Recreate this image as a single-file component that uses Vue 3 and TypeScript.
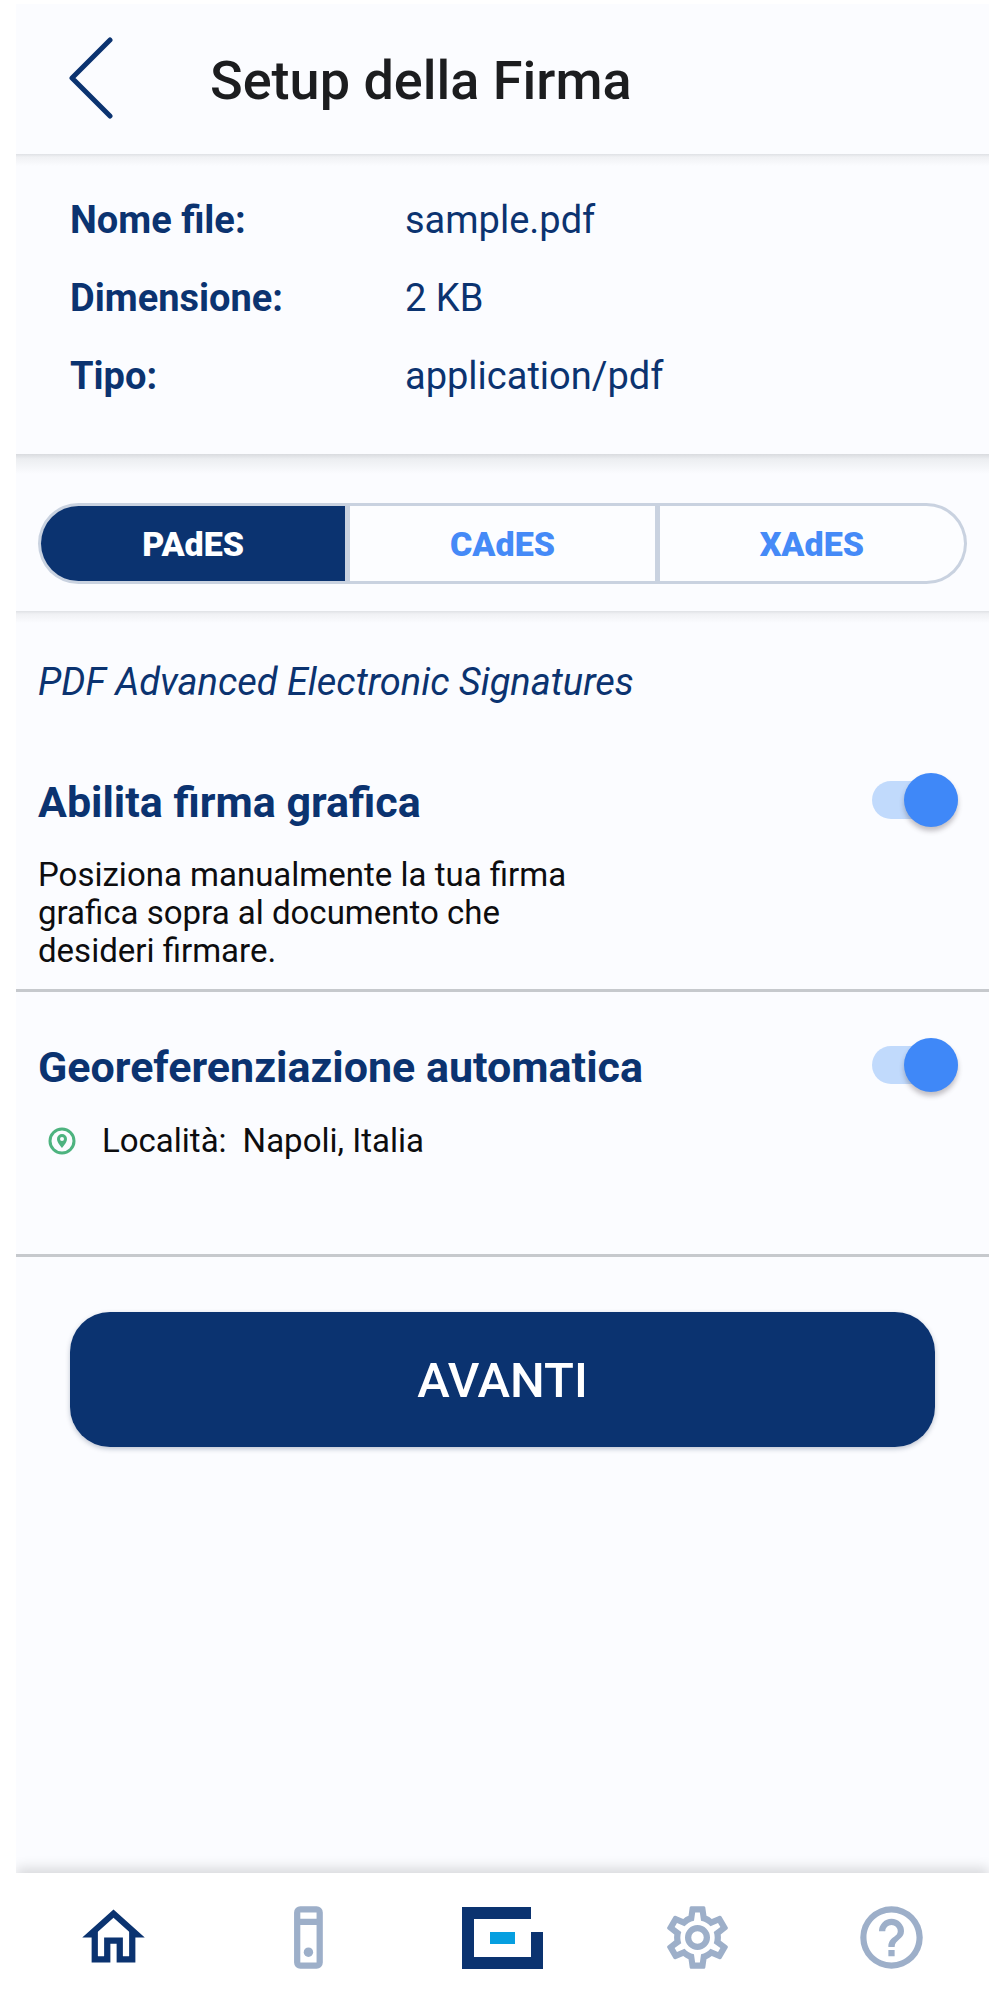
<script setup lang="ts">
import { ref } from 'vue'

interface FileRow { label: string; value: string }

const rows: FileRow[] = [
  { label: 'Nome file:', value: 'sample.pdf' },
  { label: 'Dimensione:', value: '2 KB' },
  { label: 'Tipo:', value: 'application/pdf' },
]
const formats: string[] = ['PAdES', 'CAdES', 'XAdES']
const selected = ref<string>('PAdES')
const graphic = ref<boolean>(true)
const geo = ref<boolean>(true)
</script>

<template>
  <div class="page">
    <header class="bar">
      <button class="back" type="button" aria-label="Indietro">
        <svg width="46" height="84" viewBox="0 0 46 84" fill="none" stroke="currentColor" stroke-width="5" stroke-linecap="round" stroke-linejoin="round">
          <path d="M42 3L4 41L42 79" />
        </svg>
      </button>
      <h1>Setup della Firma</h1>
    </header>

    <main>
      <dl class="info shade">
        <div v-for="row in rows" :key="row.label" class="info-row">
          <dt>{{ row.label }}</dt>
          <dd>{{ row.value }}</dd>
        </div>
      </dl>

      <div class="formats shade deep">
        <div class="segments">
          <button
            v-for="format in formats"
            :key="format"
            type="button"
            :class="{ active: selected === format }"
            :aria-pressed="selected === format"
            @click="selected = format"
          >{{ format }}</button>
        </div>
      </div>

      <section class="option shade">
        <p class="kind">PDF Advanced Electronic Signatures</p>
        <div class="option-head">
          <label for="graphic">Abilita firma grafica</label>
          <input id="graphic" v-model="graphic" class="switch" type="checkbox">
        </div>
        <p class="note">Posiziona manualmente la tua firma grafica sopra al documento che desideri firmare.</p>
      </section>

      <section class="option geo">
        <div class="option-head">
          <label for="geo">Georeferenziazione automatica</label>
          <input id="geo" v-model="geo" class="switch" type="checkbox">
        </div>
        <p class="place">
          <svg width="28" height="28" viewBox="0 0 28 28" aria-hidden="true">
            <circle cx="14" cy="14" r="12" fill="none" stroke="currentColor" stroke-width="3" />
            <path fill="currentColor" fill-rule="evenodd" d="M14 7a5 5 0 0 0-5 5c0 3.600 5 9 5 9s5-5.400 5-9a5 5 0 0 0-5-5zm0 3a2 2 0 1 1 0 4a2 2 0 0 1 0-4z" />
          </svg>
          <span>Località:</span>
          <span>Napoli, Italia</span>
        </p>
      </section>

      <div class="action">
        <button class="next" type="button">AVANTI</button>
      </div>
    </main>

    <nav class="tabs">
      <a href="#home" class="current" aria-label="Home">
        <svg viewBox="0 0 24 24"><path d="M12 5.690L17 10.190V18H15V12H9V18H7V10.190L12 5.690M12 3L2 12H5V20H11V14H13V20H19V12H22" /></svg>
      </a>
      <a href="#device" aria-label="Dispositivo">
        <svg viewBox="0 0 24 24">
          <path fill-rule="evenodd" d="M9.700 2h5.200a2 2 0 0 1 2 2v16a2 2 0 0 1-2 2H9.700a2 2 0 0 1-2-2V4a2 2 0 0 1 2-2zm0 2v2h5.200V4zm0 4v12h5.200V8z" />
          <circle cx="12.300" cy="16.700" r="1.500" />
        </svg>
      </a>
      <a href="#sign" aria-label="Firma">
        <svg class="logo" viewBox="0 0 81 62">
          <path fill="#0b3370" d="M0 0H69V12H12V50H69V25H81V62H0z" />
          <path fill="#069fe0" d="M28 25H53V37H28z" />
        </svg>
      </a>
      <a href="#settings" aria-label="Impostazioni">
        <svg viewBox="0 0 24 24"><path d="M12,8A4,4 0 0,1 16,12A4,4 0 0,1 12,16A4,4 0 0,1 8,12A4,4 0 0,1 12,8M12,10A2,2 0 0,0 10,12A2,2 0 0,0 12,14A2,2 0 0,0 14,12A2,2 0 0,0 12,10M10,22C9.750,22 9.540,21.820 9.500,21.580L9.130,18.930C8.500,18.680 7.960,18.340 7.440,17.940L4.950,18.950C4.730,19.030 4.460,18.950 4.340,18.730L2.340,15.270C2.210,15.050 2.270,14.780 2.460,14.630L4.570,12.970L4.500,12L4.570,11L2.460,9.370C2.270,9.220 2.210,8.950 2.340,8.730L4.340,5.270C4.460,5.050 4.730,4.960 4.950,5.050L7.440,6.050C7.960,5.660 8.500,5.320 9.130,5.070L9.500,2.420C9.540,2.180 9.750,2 10,2H14C14.250,2 14.460,2.180 14.500,2.420L14.870,5.070C15.500,5.320 16.040,5.660 16.560,6.050L19.050,5.050C19.270,4.960 19.540,5.050 19.660,5.270L21.660,8.730C21.790,8.950 21.730,9.220 21.540,9.370L19.430,11L19.500,12L19.430,13L21.540,14.630C21.730,14.780 21.790,15.050 21.660,15.270L19.660,18.730C19.540,18.950 19.270,19.040 19.050,18.950L16.560,17.950C16.040,18.340 15.500,18.680 14.870,18.930L14.500,21.580C14.460,21.820 14.250,22 14,22H10M11.250,4L10.880,6.610C9.680,6.860 8.620,7.500 7.850,8.390L5.440,7.350L4.690,8.650L6.800,10.200C6.400,11.370 6.400,12.640 6.800,13.800L4.680,15.360L5.430,16.660L7.860,15.620C8.630,16.500 9.680,17.140 10.870,17.380L11.240,20H12.760L13.130,17.390C14.320,17.140 15.370,16.500 16.140,15.620L18.570,16.660L19.320,15.360L17.200,13.810C17.600,12.640 17.600,11.370 17.200,10.200L19.310,8.650L18.560,7.350L16.150,8.390C15.380,7.500 14.320,6.860 13.120,6.620L12.750,4H11.250Z" /></svg>
      </a>
      <a href="#help" aria-label="Aiuto">
        <svg viewBox="0 0 24 24"><path d="M11,18H13V16H11V18M12,2A10,10 0 0,0 2,12A10,10 0 0,0 12,22A10,10 0 0,0 22,12A10,10 0 0,0 12,2M12,20C7.590,20 4,16.410 4,12C4,7.590 7.590,4 12,4C16.410,4 20,7.590 20,12C20,16.410 16.410,20 12,20M12,6A4,4 0 0,0 8,10H10A2,2 0 0,1 12,8A2,2 0 0,1 14,10C14,12 11,11.750 11,15H13C13,12.750 16,12.500 16,10A4,4 0 0,0 12,6Z" /></svg>
      </a>
    </nav>
  </div>
</template>

<style>
body {
  background: #fff;
}
</style>

<style scoped>
.page {
  display: flex;
  flex-direction: column;
  box-sizing: border-box;
  min-height: 100vh;
  padding: 4px 11px 0 16px;
  font-family: Roboto, "Noto Sans", sans-serif;
  color: #0b3370;
}
h1, p, dl, dd {
  margin: 0;
}
button {
  font-family: inherit;
  cursor: pointer;
}
.bar {
  display: flex;
  align-items: center;
  height: 150px;
  padding-left: 52px;
  background: #fbfcff;
}
.back {
  display: flex;
  padding: 0;
  border: 0;
  background: none;
  color: #0b3370;
}
h1 {
  margin-left: 96px;
  padding-top: 4px;
  font-size: 54px;
  line-height: 64px;
  font-weight: 500;
  color: #1c1d1f;
}
main {
  flex: 1;
  background: #fbfcff;
}
.shade {
  background: linear-gradient(#dfe1e5 0, #f0f1f4 3px, #fbfcff 12px);
}
.deep {
  background: linear-gradient(#d9dbdf 0, #eceef1 5px, #fbfcff 20px);
}
.info {
  display: flex;
  flex-direction: column;
  gap: 34px;
  padding: 44px 54px 56px;
}
.info-row {
  display: flex;
  font-size: 38px;
  line-height: 44px;
}
dt {
  width: 335px;
  font-weight: 700;
}
.formats {
  padding: 49px 22px 27px;
}
.segments {
  display: flex;
  gap: 5px;
  padding: 3px;
  overflow: hidden;
  border-radius: 41px;
  background: #c9d2e0;
}
.segments button {
  flex: 1;
  height: 75px;
  padding: 0;
  border: 0;
  background: #fcfdff;
  color: #458af7;
  font-size: 34px;
  font-weight: 900;
}
.segments button:first-child {
  border-radius: 38px 0 0 38px;
}
.segments button:last-child {
  border-radius: 0 38px 38px 0;
}
.segments button.active {
  background: #0b3370;
  color: #fff;
}
.option {
  padding: 47px 22px 19px;
  border-bottom: 3px solid #c6c9cd;
}
.kind {
  margin-bottom: 64px;
  font-size: 38px;
  line-height: 48px;
  font-style: italic;
}
.option-head {
  display: flex;
  align-items: center;
  justify-content: space-between;
  padding-right: 9px;
}
.option-head label {
  padding-top: 4px;
  font-size: 43px;
  line-height: 56px;
  font-weight: 700;
}
.switch {
  display: flex;
  align-items: center;
  justify-content: flex-end;
  appearance: none;
  width: 86px;
  height: 38px;
  margin: 0;
  border-radius: 19px;
  background: #c1dafc;
  cursor: pointer;
}
.switch::before {
  content: "";
  flex: none;
  width: 54px;
  height: 54px;
  border-radius: 50%;
  background: #3f88f8;
  box-shadow: 0 4px 5px rgba(60, 50, 60, 0.3);
}
.switch:not(:checked) {
  justify-content: flex-start;
  background: #d5d9e0;
}
.note {
  max-width: 560px;
  margin-top: 26px;
  font-size: 33px;
  line-height: 38px;
  color: #0d0d0f;
}
.geo {
  padding: 43px 22px 94px;
}
.place {
  display: flex;
  align-items: center;
  margin-top: 27px;
  padding-left: 10px;
  font-size: 33px;
  line-height: 38px;
  color: #0d0d0f;
}
.place svg {
  margin-right: 26px;
  color: #4db37f;
}
.place span + span {
  margin-left: 16px;
}
.action {
  padding: 55px 54px 0;
}
.next {
  display: block;
  width: 100%;
  height: 135px;
  padding: 2px 0 0;
  border: 0;
  border-radius: 40px;
  background: #0b3370;
  box-shadow: 0 2px 5px rgba(11, 30, 70, 0.25);
  color: #fff;
  font-size: 49px;
  font-weight: 500;
}
.tabs {
  display: flex;
  box-sizing: border-box;
  height: 127px;
  padding-top: 2px;
  background: #fff;
  box-shadow: 0 -5px 12px rgba(0, 0, 0, 0.14);
  clip-path: inset(-20px 0 0 0);
}
.tabs a {
  flex: 1;
  display: flex;
  align-items: center;
  justify-content: center;
  color: #9dafc9;
}
.tabs a.current {
  color: #0b3370;
}
.tabs svg {
  width: 75px;
  height: 75px;
  fill: currentColor;
}
.tabs svg.logo {
  width: 81px;
  height: 62px;
}
</style>
